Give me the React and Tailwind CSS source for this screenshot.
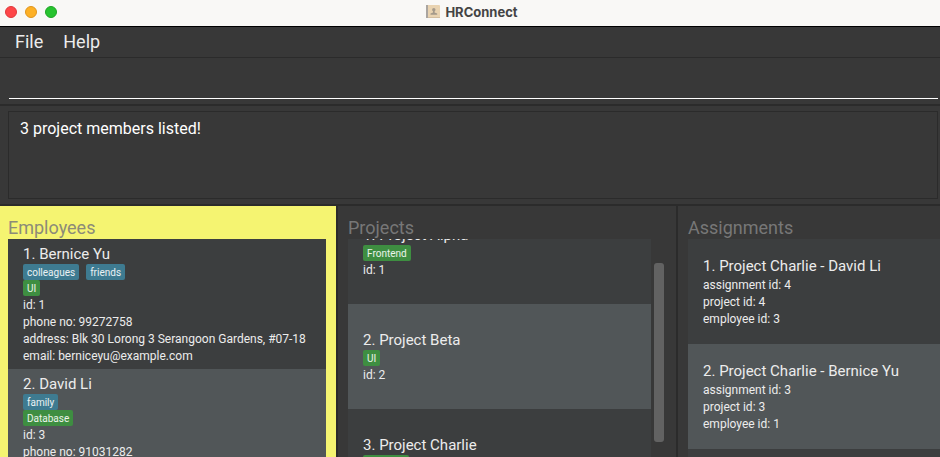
const employees = [
  {
    name: "Bernice Yu",
    tags: ["colleagues", "friends"],
    skills: ["UI"],
    lines: [
      "id: 1",
      "phone no: 99272758",
      "address: Blk 30 Lorong 3 Serangoon Gardens, #07-18",
      "email: berniceyu@example.com",
    ],
  },
  {
    name: "David Li",
    tags: ["family"],
    skills: ["Database"],
    lines: ["id: 3", "phone no: 91031282"],
  },
];

const projects = [
  { name: "Project Alpha", skills: ["Frontend"], lines: ["id: 1"] },
  { name: "Project Beta", skills: ["UI"], lines: ["id: 2"] },
  { name: "Project Charlie", skills: ["Backend"], lines: ["id: 3"] },
];

const assignments = [
  {
    name: "Project Charlie - David Li",
    lines: ["assignment id: 4", "project id: 4", "employee id: 3"],
  },
  {
    name: "Project Charlie - Bernice Yu",
    lines: ["assignment id: 3", "project id: 3", "employee id: 1"],
  },
];

function Tags({ items, color }) {
  if (!items) return null;
  return (
    <div className="flex h-4 gap-[7px]">
      {items.map((t) => (
        <span key={t} className={`rounded-[2px] px-1 pt-[2px] text-[10px] leading-[14px] text-white/90 ${color}`}>
          {t}
        </span>
      ))}
    </div>
  );
}

function Card({ item, index, size }) {
  return (
    <li
      className={`flex shrink-0 flex-col px-[15px] whitespace-nowrap text-[#ececec] ${size} ${
        index % 2 ? "bg-[#515658]" : "bg-[#3c3e3f]"
      }`}
    >
      <h3 className="text-[15px] leading-5">
        {index + 1}. {item.name}
      </h3>
      <Tags items={item.tags} color="bg-[#3e7b91]" />
      <Tags items={item.skills} color="bg-[#3e8e41]" />
      {item.lines.map((l) => (
        <p key={l} className="pt-[2px] text-xs leading-[15px]">
          {l}
        </p>
      ))}
    </li>
  );
}

function Heading({ children, color }) {
  return <h2 className={`pt-[11px] text-lg leading-[22px] ${color}`}>{children}</h2>;
}

function Logo() {
  return (
    <svg width="14" height="14" viewBox="0 0 14 14" aria-hidden="true">
      <rect x="0" y="0" width="14" height="13" rx="1" fill="#e9d3b1" />
      <rect x="0" y="0" width="2" height="13" fill="#aaa5a0" />
      <rect x="2" y="12" width="12" height="1" fill="#d3bea0" />
      <circle cx="7.8" cy="4.8" r="1.7" fill="#a59a8b" />
      <path d="M7 6h1.6v1.500l2.600 1v1.200H4.500V8.500l2.500-1z" fill="#a59a8b" />
    </svg>
  );
}

export default function App() {
  return (
    <div className="flex h-screen flex-col overflow-hidden bg-[#383838] font-['Roboto','Liberation_Sans',sans-serif]">
      <header className="grid h-[27px] shrink-0 grid-cols-[1fr_auto_1fr] items-center border-b border-black bg-[#f9f8f6] px-[5px] pb-[2px]">
        <div className="flex gap-2">
          <button aria-label="Close" className="size-3 rounded-full border border-[#e0383b] bg-[#fe4648]" />
          <button aria-label="Minimise" className="size-3 rounded-full border border-[#e0951c] bg-[#fdb025]" />
          <button aria-label="Zoom" className="size-3 rounded-full border border-[#1ea524] bg-[#27c32f]" />
        </div>
        <div className="flex items-center gap-[5px] pl-1">
          <Logo />
          <h1 className="font-['Inter','Liberation_Sans',sans-serif] text-[13px] leading-5 font-bold text-[#444444]">
            HRConnect
          </h1>
        </div>
      </header>

      <nav className="flex h-[31px] shrink-0 items-center gap-5 border-b border-[#2b2b2b] px-[15px] text-lg leading-5 text-[#ececec]">
        <button>File</button>
        <button>Help</button>
      </nav>

      <div className="shrink-0 border-b-2 border-[#2b2b2b] pt-[5px] pr-[2px] pb-[5px] pl-[9px]">
        <input
          aria-label="Command"
          className="block h-9 w-full border-b border-white bg-transparent text-lg text-white outline-none"
        />
      </div>

      <div className="shrink-0 border-b-2 border-[#2b2b2b] pt-[5px] pr-[2px] pb-[5px] pl-2">
        <output className="block h-[88px] border border-[#2b2b2b] px-[11px] py-[7px] text-base leading-5 text-white">
          3 project members listed!
        </output>
      </div>

      <main className="grid min-h-0 flex-1 grid-cols-[338fr_340fr_262fr]">
        <section className="flex min-w-0 flex-col border-r-2 border-[#2b2b2b] bg-[#f5f471] pr-[10px] pl-2">
          <Heading color="text-[#8c8b78]">Employees</Heading>
          <ul className="flex min-h-0 flex-1 flex-col overflow-hidden">
            {employees.map((e, i) => (
              <Card key={e.name} item={e} index={i} size="py-[5px]" />
            ))}
          </ul>
        </section>

        <section className="flex min-w-0 flex-col border-r-2 border-[#2b2b2b] pr-3 pl-[10px]">
          <Heading color="text-[#777777]">Projects</Heading>
          <div className="flex min-h-0 flex-1 gap-[3px]">
            <div className="min-w-0 flex-1 overflow-hidden">
              <ul className="-mt-10 flex flex-col">
                {projects.map((p, i) => (
                  <Card key={p.name} item={p} index={i} size="h-[105px] justify-center" />
                ))}
              </ul>
            </div>
            <div className="w-[10px] pt-6">
              <div className="h-[179px] rounded-[3px] bg-[#626262]" />
            </div>
          </div>
        </section>

        <section className="flex min-w-0 flex-col pl-[10px]">
          <Heading color="text-[#777777]">Assignments</Heading>
          <ul className="flex min-h-0 flex-1 flex-col overflow-hidden bg-[#3c3e3f]">
            {assignments.map((a, i) => (
              <Card key={a.name} item={a} index={i} size="h-[105px] justify-center" />
            ))}
          </ul>
        </section>
      </main>
    </div>
  );
}
